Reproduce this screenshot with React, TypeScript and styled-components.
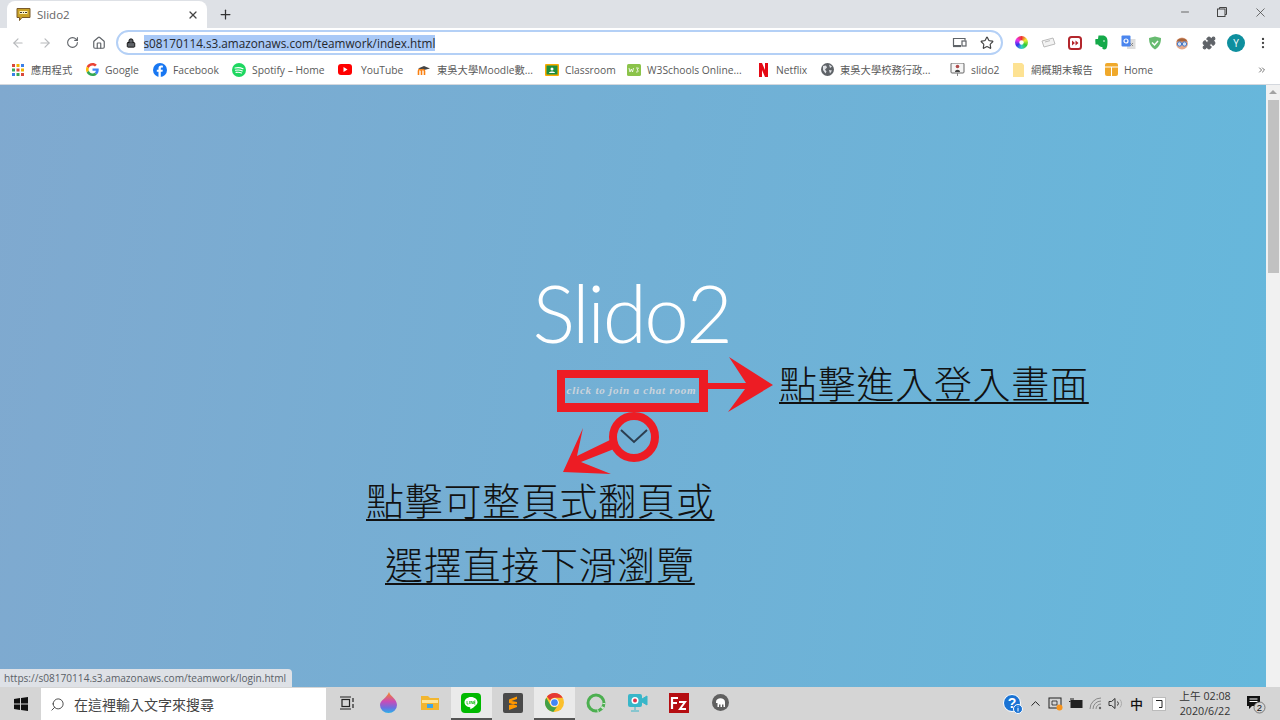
import React from "react";
import styled, { createGlobalStyle } from "styled-components";
import {
  ArrowLeft, ArrowRight, RotateCw, Home, Lock, Star, X, Plus, Minus, EllipsisVertical,
  Puzzle, Search, ChevronUp, ChevronsRight,
} from "lucide-react";

const UI = `"Open Sans", "Noto Sans CJK TC", sans-serif`;
const Global = createGlobalStyle`
  html, body { margin: 0; padding: 0; height: 100%; overflow: hidden; }
  body { font-family: ${UI}; }
`;

const Screen = styled.div`
  width: 1280px; height: 720px; display: flex; flex-direction: column; overflow: hidden; background: #fff;
`;
const TabStrip = styled.div`
  height: 28px; flex: none; background: #dee1e6; display: flex; align-items: flex-end; padding-left: 7px; box-sizing: border-box;
`;
const Tab = styled.div`
  width: 200px; height: 27px; background: #fff; border-radius: 8px 8px 0 0; display: flex; align-items: center;
  padding: 0 8px 0 9px; box-sizing: border-box; color: #5f6368;
`;
const TabTitle = styled.span`
  font-size: 11.5px; margin-left: 6px; flex: 1; color: #666;
`;
const NewTab = styled.span`
  width: 36px; align-self: center; flex: none; display: flex; align-items: center; justify-content: center;
`;
const WindowButton = styled.span<{ $w: number }>`
  width: ${p => p.$w}px; height: 24px; align-self: flex-start; flex: none; display: flex; align-items: center; justify-content: center;
`;
const IconSlot = styled.span<{ $w?: number }>`
  width: ${p => p.$w ?? 27}px; flex: none; display: flex; align-items: center; justify-content: center; color: #5f6368;
`;
const Spacer = styled.div`flex: 1;`;
const Toolbar = styled.div`
  height: 29px; flex: none; display: flex; align-items: center; padding-left: 4.5px; box-sizing: border-box; background: #fff;
`;
const Omnibox = styled.div`
  width: 887px; height: 25px; margin-left: 4px; border: 2px solid #b4d0f6; border-radius: 13px; box-sizing: border-box;
  display: flex; align-items: center; padding-left: 8px; flex: none;
`;
const Url = styled.span`
  margin-left: 8px; background: #a9c9f7; color: #26282c; font-size: 11.75px; line-height: 16px; white-space: nowrap; font-family: "Open Sans", sans-serif;
`;
const Extensions = styled.div`
  display: flex; align-items: center; margin-left: 5px;
`;
const Avatar = styled.div`
  width: 18px; height: 18px; border-radius: 50%; background: #0e8f9e; color: #fff; font-size: 10px; display: flex; align-items: center; justify-content: center;
`;
const Bookmarks = styled.div`
  height: 28px; flex: none; display: flex; align-items: center; padding: 0 0 2px 11px; box-sizing: border-box; background: #fff; border-bottom: 1px solid #d4d8de;
`;
const Bookmark = styled.div<{ $w: number }>`
  width: ${p => p.$w}px; flex: none; display: flex; align-items: center; gap: 6px; font-size: 10.3px; color: #5a5a5a; white-space: nowrap; overflow: hidden;
`;
const BookIcon = styled.span`
  min-width: 14px; height: 14px; flex: none; display: flex; align-items: center; justify-content: center;
`;
const Viewport = styled.div`
  flex: 1; min-height: 0; display: flex; position: relative;
`;
const Page = styled.main`
  flex: 1; position: relative; background: linear-gradient(100deg, #80a9cf 0%, #72b0d5 50%, #65b8dc 100%);
  display: flex; flex-direction: column; align-items: center; padding-top: 183px; box-sizing: border-box; overflow: hidden;
`;
const Title = styled.h1`
  margin: 0 0 0 -3px; font: 300 80px/88px "Lato", sans-serif; color: #fff; letter-spacing: -2.4px;
`;
const JoinLink = styled.a`
  margin-top: 22px; margin-left: -3px; width: 134px; height: 25px; display: flex; align-items: center; justify-content: center; white-space: nowrap;
  font: italic 700 11px/25px "Liberation Serif", serif; letter-spacing: 0.78px; color: #cbd4dc;
`;
const ChevronBtn = styled.div`
  margin-top: 26px; margin-left: 1px; display: flex;
`;
const Annotations = styled.svg`
  position: absolute; left: 0; top: 0; width: 1266px; height: 602px; pointer-events: none;
`;
const Note = styled.a<{ $x: number; $y: number }>`
  position: absolute; left: ${p => p.$x}px; top: ${p => p.$y}px; font: 300 38px/46px "Noto Sans CJK TC", sans-serif;
  letter-spacing: 0.72px; color: #111; text-decoration: underline; text-decoration-thickness: 2px; text-underline-offset: 4px; white-space: nowrap;
`;
const Scrollbar = styled.div`
  width: 14px; flex: none; background: #f1f1f1; display: flex; flex-direction: column; align-items: center; padding-top: 5px; box-sizing: border-box;
`;
const ScrollArrow = styled.div`
  width: 0; height: 0; border-left: 4px solid transparent; border-right: 4px solid transparent; border-bottom: 4px solid #a3a3a3;
`;
const Thumb = styled.div`
  width: 11px; height: 173px; margin-top: 6px; margin-left: 1px; background: #c1c1c1;
`;
const StatusBubble = styled.div`
  position: absolute; left: 0; bottom: 0; width: 292px; height: 18px; background: #dee1e6; border-radius: 0 4px 0 0; color: #5a5f66;
  font-size: 10.1px; line-height: 18px; padding-left: 4px; box-sizing: border-box; white-space: nowrap;
`;
const Taskbar = styled.footer`
  height: 33px; flex: none; background: #d5d5d5; display: flex; align-items: center; color: #222;
`;
const StartSlot = styled.div`
  width: 41px; display: flex; justify-content: center; flex: none;
`;
const SearchBox = styled.div`
  width: 285px; height: 32px; align-self: flex-end; background: #fff; display: flex; align-items: center; padding-left: 9px; gap: 9px; box-sizing: border-box; flex: none;
  font-size: 14px; color: #444;
`;
const Apps = styled.div`
  display: flex; align-items: stretch; align-self: stretch; flex: none;
`;
const AppSlot = styled.div<{ $active?: boolean }>`
  width: 41.5px; display: flex; align-items: center; justify-content: center; box-sizing: border-box;
  background: ${p => (p.$active ? "#eaeaea" : "transparent")};
  border-bottom: 2px solid ${p => (p.$active ? "#555" : "transparent")};
`;
const Tray = styled.div`
  display: flex; align-items: center; margin-left: auto; flex: none;
`;
const TraySlot = styled.div<{ $w: number }>`
  width: ${p => p.$w}px; flex: none; display: flex; align-items: center; justify-content: center; font-size: 13px; font-weight: 500; color: #111;
`;
const Clock = styled.div`
  width: 54px; margin-left: 7px; flex: none; text-align: center; font-size: 10.7px; line-height: 15px; color: #333; white-space: nowrap;
`;

const Favicon = () => (
  <svg width="15" height="15" viewBox="0 0 15 15"><path d="M1 1.5h13v9H6l-2.5 3v-3H1z" fill="#c9a227" stroke="#7a5a2a" strokeWidth="1"/><rect x="3.5" y="4" width="8" height="3" fill="#fff3c0"/><path d="M4 5.5h2M7 5.5h1M9 5.5h2" stroke="#333"/></svg>
);
const CastIcon = () => (
  <svg width="15" height="13" viewBox="0 0 15 13" fill="none" stroke="#5f6368" strokeWidth="1.2"><path d="M9 9.5H1.5V2.5H13v2"/><rect x="10" y="5" width="4" height="5"/><path d="M1 10.5h8"/></svg>
);
const ColorWheel = () => (
  <svg width="13" height="13" viewBox="0 0 14 14" style={{ background: "conic-gradient(#e33,#ee3,#3c3,#3cc,#33e,#e3e,#e33)", borderRadius: "50%" }}><circle cx="7" cy="7" r="2.4" fill="#fff"/></svg>
);
const Ticket = () => (
  <svg width="15" height="11" viewBox="0 0 15 11"><path d="M1 4l11-3 2 6-11 3z" fill="#f3f3f3" stroke="#bbb"/><path d="M4 5l5-1.4" stroke="#bbb"/></svg>
);
const RedPlay = () => (
  <svg width="14" height="14" viewBox="0 0 14 14"><rect x="1" y="1" width="12" height="12" rx="2.5" fill="#fff" stroke="#b3262c" strokeWidth="2"/><path d="M4 4.5l3 2.5-3 2.5zM7.5 4.5l3 2.5-3 2.5z" fill="#b3262c"/></svg>
);
const Evernote = () => (
  <svg width="13" height="15" viewBox="0 0 13 15"><path d="M3.5 0.5h4C10 0.5 12.500 2 12.500 6c0 5-.5 8.500-3 8.500-2 0-2.500-1-2-2.500-1.500 0-3.500-.5-4.500-2.500H.5C.5 7 0 5 .5 4H3z" fill="#14a949"/><circle cx="9" cy="6" r=".8" fill="#fff"/></svg>
);
const Translate = () => (
  <svg width="15" height="15" viewBox="0 0 15 15"><rect x="6" y="4" width="8.500" height="10" fill="#ddd"/><path d="M9 8l3 3M12 8l-3 3" stroke="#888"/><rect x="0.500" y="0.500" width="9" height="11" rx="1" fill="#4a85ee"/><circle cx="5" cy="6" r="2" fill="none" stroke="#fff" strokeWidth="1.2"/></svg>
);
const Shield = () => (
  <svg width="14" height="14" viewBox="0 0 14 14"><path d="M1 2l6-1.500L13 2c0 6-2 9-6 11.500C3 11 1 8 1 2z" fill="#68bb71"/><path d="M4 6.500l2.500 2.500L10 5" stroke="#fff" strokeWidth="1.500" fill="none"/></svg>
);
const Nerd = () => (
  <svg width="14" height="14" viewBox="0 0 14 14"><circle cx="7" cy="7.500" r="6" fill="#e6a98a"/><path d="M1.500 5.500C3 1 11 1 12.500 5.500z" fill="#a8643a"/><circle cx="4.500" cy="8" r="2.200" fill="#cfe0f4" stroke="#4577c8"/><circle cx="9.500" cy="8" r="2.200" fill="#cfe0f4" stroke="#4577c8"/></svg>
);
const AppsGrid = () => {
  const cols = ["#d9483b", "#f0b400", "#3a7fe8", "#3aa757", "#d9483b", "#f0b400", "#3a7fe8", "#3aa757", "#d9483b"];
  return <svg width="12" height="12" viewBox="0 0 12 12">{cols.map((c, i) => <rect key={i} x={(i % 3) * 4.500} y={Math.floor(i / 3) * 4.500} width="3" height="3" fill={c}/>)}</svg>;
};
const GoogleG = () => (
  <svg width="13" height="13" viewBox="0 0 48 48"><path fill="#EA4335" d="M24 9.500c3.500 0 6.700 1.300 9.100 3.500l6.800-6.800C35.800 2.400 30.200 0 24 0 14.600 0 6.500 5.400 2.600 13.200l7.900 6.200C12.400 13.700 17.700 9.500 24 9.500z"/><path fill="#4285F4" d="M47 24.500c0-1.600-.1-3.100-.4-4.500H24v9h12.900c-.6 3-2.200 5.500-4.700 7.200l7.700 6C44.400 38 47 31.800 47 24.500z"/><path fill="#FBBC05" d="M10.500 28.600c-.5-1.400-.8-3-.8-4.600s.3-3.200.8-4.600l-7.900-6.200C.9 16.500 0 20.100 0 24s.9 7.500 2.600 10.800z"/><path fill="#34A853" d="M24 48c6.500 0 11.900-2.100 15.900-5.800l-7.700-6c-2.100 1.400-4.900 2.300-8.200 2.300-6.300 0-11.600-4.200-13.500-9.900l-7.900 6.200C6.500 42.600 14.600 48 24 48z"/></svg>
);
const Fb = () => (
  <svg width="14" height="14" viewBox="0 0 14 14"><circle cx="7" cy="7" r="7" fill="#1877f2"/><path d="M7.800 14V8.800h1.700l.3-2H7.800V5.500c0-.6.300-1.100 1.100-1.100h1V2.700s-.9-.2-1.700-.2c-1.700 0-2.700 1-2.700 2.800v1.500H3.800v2h1.700V14z" fill="#fff"/></svg>
);
const Spotify = () => (
  <svg width="14" height="14" viewBox="0 0 14 14"><circle cx="7" cy="7" r="7" fill="#1ed760"/><path d="M3 5c2.800-.7 5.500-.5 8 .8M3.500 7.300c2.400-.6 4.700-.4 6.800.7M4 9.400c2-.4 3.800-.3 5.500.6" stroke="#fff" strokeWidth="1.100" fill="none" strokeLinecap="round"/></svg>
);
const Yt = () => (
  <svg width="17" height="11" viewBox="0 0 17 11"><rect width="14" height="11" rx="3" fill="#f00"/><path d="M5.500 3l4 2.500-4 2.500z" fill="#fff"/></svg>
);
const Moodle = () => (
  <svg width="14" height="12" viewBox="0 0 14 12"><path d="M1 4.500L7 2l6 2.500-6 1.500z" fill="#444"/><path d="M1.500 11V7c0-2 2-2 3 0v4M4.500 11V7c0-2 2.500-2 3 0v4M7.500 11V7" stroke="#f98012" strokeWidth="1.600" fill="none"/></svg>
);
const Classroom = () => (
  <svg width="14" height="12" viewBox="0 0 14 12"><rect width="14" height="12" rx="1" fill="#f9ab00"/><rect x="1.500" y="1.500" width="11" height="9" fill="#1e8e3e"/><circle cx="7" cy="5" r="1.500" fill="#fff"/><path d="M4 9c0-2 6-2 6 0z" fill="#fff"/></svg>
);
const W3 = () => (
  <svg width="14" height="12" viewBox="0 0 14 12"><rect width="14" height="12" rx="1.500" fill="#8bc34a"/><path d="M2 4l1 4 1.300-3 1.200 3 1-4M9 4h2.500L10 6c1.800 0 1.800 2.500-1 2" stroke="#fff" fill="none" strokeWidth=".8"/></svg>
);
const Netflix = () => (
  <svg width="9" height="14" viewBox="0 0 9 14"><path d="M0 0h3l3 7V0h3v14H6L3 7v7H0z" fill="#e50914"/></svg>
);
const Globe = () => (
  <svg width="13" height="13" viewBox="0 0 13 13"><circle cx="6.500" cy="6.500" r="6.500" fill="#5f6368"/><path d="M2 3l3-.5 1 2-2 2 1.500 2-1 2L2 7zM8 1.500l3 2-2 1.500zM8 7l3 .5-2 3z" fill="#dfe1e5"/></svg>
);
const SlidoFav = () => (
  <svg width="15" height="15" viewBox="0 0 15 15"><rect x="1" y="1" width="13" height="10" rx="1" fill="#f5f5f5" stroke="#666"/><circle cx="7.500" cy="4.500" r="1.800" fill="#b04a4a"/><path d="M5 10c0-3 5-3 5 0z" fill="#444"/><path d="M7.500 11v3" stroke="#888"/></svg>
);
const Folder = () => (
  <svg width="11" height="14" viewBox="0 0 11 14"><path d="M0 0h9l2 2v12H0z" fill="#fde293"/></svg>
);
const Box = () => (
  <svg width="13" height="13" viewBox="0 0 13 13"><rect width="13" height="13" rx="2" fill="#f0a92b"/><path d="M0 4h13M6.500 4v9" stroke="#fff" strokeWidth="1"/></svg>
);
const Windows = () => (
  <svg width="14" height="14" viewBox="0 0 14 14" fill="#111"><path d="M0 2l6-.9V6.600H0zM7 1l7-1v6.600H7zM0 7.400h6v5.500L0 12zM7 7.400h7V14l-7-1z"/></svg>
);
const TaskView = () => (
  <svg width="16" height="14" viewBox="0 0 16 14" fill="none" stroke="#222" strokeWidth="1.200"><rect x="3" y="3.500" width="7.500" height="7"/><path d="M1 1h11M1 13h11M14 2v4M14 8v4"/></svg>
);
const Fluent = () => (
  <svg width="17" height="21" viewBox="0 0 17 21"><defs><linearGradient id="fl" x1="0" y1="0" x2="0" y2="1"><stop offset="0" stopColor="#f58a1f"/><stop offset=".45" stopColor="#c94bb7"/><stop offset=".75" stopColor="#6c6fe0"/><stop offset="1" stopColor="#29b3e8"/></linearGradient></defs><path d="M9 0c1 4 8 7 8 13a8.500 8 0 0 1-17 0C0 8 7 6 9 0z" fill="url(#fl)"/></svg>
);
const Explorer = () => (
  <svg width="18" height="16" viewBox="0 0 18 16"><path d="M0 1h7l2 2h9v12H0z" fill="#f2b630"/><rect x="1" y="5" width="16" height="3" fill="#fde59a"/><rect x="6" y="9" width="6" height="4" fill="#3ea6e8"/></svg>
);
const Line = () => (
  <svg width="20" height="20" viewBox="0 0 20 20"><rect width="20" height="20" rx="4" fill="#00b900"/><path d="M10 4c-3.600 0-6.500 2.300-6.500 5.200 0 2.600 2.300 4.700 5.400 5.100.8.200.3 1.500.4 1.800.2.300 3.800-2 5.300-3.700 1.200-1.100 1.900-2 1.900-3.200C16.500 6.300 13.600 4 10 4z" fill="#fff"/><path d="M6 8v3h1.500M8.700 8v3M10 11V8l2 3V8M14.500 8H13v3h1.500M13 9.500h1.300" stroke="#00b900" strokeWidth=".7" fill="none"/></svg>
);
const Sublime = () => (
  <svg width="20" height="20" viewBox="0 0 20 20"><rect width="20" height="20" rx="2" fill="#4a4a4a"/><path d="M14 3.500L6 6.500v3.500l8 2.500v-3.500L8.500 8 14 6zM6 12l8-1.500V14l-8 3z" fill="#ff9800"/></svg>
);
const Chrome = () => (
  <svg width="19" height="19" viewBox="0 0 48 48"><circle cx="24" cy="24" r="24" fill="#fbc02d"/><path d="M24 0a24 24 0 0 1 20.800 12H24a12 12 0 0 0-11 7L5 9a24 24 0 0 1 19-9z" fill="#e53935"/><path d="M3.200 12L13.600 30A12 12 0 0 0 30 34.500L21 48A24 24 0 0 1 3.200 12z" fill="#43a047"/><circle cx="24" cy="24" r="11" fill="#fff"/><circle cx="24" cy="24" r="8.500" fill="#4285f4"/></svg>
);
const Ring = () => (
  <svg width="20" height="20" viewBox="0 0 20 20" fill="none"><circle cx="10" cy="10" r="8" stroke="#4caf50" strokeWidth="3"/><circle cx="10" cy="10" r="8" stroke="#cfe8cf" strokeWidth="3" strokeDasharray="1 3 2 4 1 40"/></svg>
);
const Recorder = () => (
  <svg width="21" height="20" viewBox="0 0 21 20"><rect x="1" y="1" width="14" height="13" rx="2" fill="#38b6c9"/><circle cx="8" cy="7.500" r="3.500" fill="#fff"/><circle cx="8" cy="7.500" r="2" fill="#e0334a"/><path d="M15 6l5-3v9l-5-3zM8 14v3M4 18h8" fill="#38b6c9" stroke="#38b6c9"/></svg>
);
const FileZilla = () => (
  <svg width="20" height="20" viewBox="0 0 20 20"><rect width="20" height="20" fill="#b50e12"/><path d="M3 16V5h6M3 10h5" stroke="#fff" strokeWidth="2.200" fill="none"/><path d="M10 9h6l-5 7h6" stroke="#fff" strokeWidth="2" fill="none"/></svg>
);
const Elephant = () => (
  <svg width="17" height="17" viewBox="0 0 17 17"><circle cx="8.500" cy="8.500" r="8.500" fill="#606060"/><path d="M4 8c0-5 9-5 9 0v5h-1.500v-2.500H10V13H8.500v-2.500H7V13H5.500V9H4z" fill="#fff"/></svg>
);
const Help = () => (
  <svg width="20" height="20" viewBox="0 0 20 20"><circle cx="9" cy="9" r="8.500" fill="#1a73d4" stroke="#fff"/><text x="9" y="14" textAnchor="middle" fontSize="14" fontWeight="700" fill="#fff" fontFamily="Liberation Sans">?</text><circle cx="15" cy="15" r="4.500" fill="#1a73d4" stroke="#fff"/><path d="M15 14v3.500M15 12.500v.8" stroke="#fff"/></svg>
);
const Defender = () => (
  <svg width="15" height="15" viewBox="0 0 15 15" fill="none"><rect x="1" y="2" width="12" height="10" stroke="#222"/><path d="M4 5h5v4H4z" stroke="#222" strokeWidth=".8"/><circle cx="11.500" cy="11.500" r="3" fill="#f7941d"/></svg>
);
const Battery = () => (
  <svg width="14" height="11" viewBox="0 0 14 11"><rect x="1.500" y="2" width="12" height="8" fill="#222"/><path d="M0 3.500h1.500M2 0v2M4 0v2" stroke="#222"/></svg>
);
const Wifi = () => (
  <svg width="14" height="13" viewBox="0 0 14 13" fill="none" stroke="#888"><path d="M1 12A11 11 0 0 1 12 1M4 12a8 8 0 0 1 8-8M7 12a5 5 0 0 1 5-5"/><circle cx="11" cy="11" r="1.200" fill="#666" stroke="none"/></svg>
);
const Volume = () => (
  <svg width="16" height="13" viewBox="0 0 16 13" fill="none" stroke="#333"><path d="M1 4.500h2.500L7 1.500v10l-3.500-3H1z"/><path d="M9.500 4.500a3 3 0 0 1 0 4" /><path d="M12 2.500a6 6 0 0 1 0 8" stroke="#aaa"/></svg>
);
const Ime = () => (
  <svg width="14" height="14" viewBox="0 0 14 14" fill="none"><rect x=".5" y=".5" width="13" height="13" fill="#fff" stroke="#bbb"/><path d="M4 3.500h6v7H7" stroke="#222"/></svg>
);
const Notify = () => (
  <svg width="20" height="20" viewBox="0 0 20 20"><path d="M1 2h13v10H6l-3 3v-3H1z" fill="#111"/><path d="M3.500 5h8M3.500 7.500h8" stroke="#fff"/><circle cx="13.500" cy="13.500" r="5.500" fill="#d5d5d5" stroke="#555" strokeWidth=".7"/><text x="13.500" y="17" textAnchor="middle" fontSize="9.500" fill="#111" fontFamily="Liberation Sans">2</text></svg>
);
const Restore = () => (
  <svg width="10" height="10" viewBox="0 0 10 10" fill="none" stroke="#444"><rect x=".5" y="2" width="7.500" height="7.500"/><path d="M2.500 2V.5h7v7H8"/></svg>
);

const bookmarks: [number, React.ReactNode, string][] = [
  [74, <AppsGrid />, "應用程式"],
  [68, <GoogleG />, "Google"],
  [79, <Fb />, "Facebook"],
  [106, <Spotify />, "Spotify – Home"],
  [79, <Yt />, "YouTube"],
  [128, <Moodle />, "東吳大學Moodle數..."],
  [82, <Classroom />, "Classroom"],
  [129, <W3 />, "W3Schools Online..."],
  [64, <Netflix />, "Netflix"],
  [130, <Globe />, "東吳大學校務行政..."],
  [61, <SlidoFav />, "slido2"],
  [93, <Folder />, "網概期末報告"],
  [153, <Box />, "Home"],
];

const apps: [React.ReactNode, boolean][] = [
  [<TaskView />, false], [<Fluent />, false], [<Explorer />, false], [<Line />, true], [<Sublime />, false],
  [<Chrome />, true], [<Ring />, false], [<Recorder />, false], [<FileZilla />, false], [<Elephant />, false],
];

export default function App() {
  return (
    <Screen lang="zh-Hant">
      <Global />
      <TabStrip>
        <Tab>
          <Favicon />
          <TabTitle>Slido2</TabTitle>
          <X size={12} strokeWidth={2.5} color="#444" />
        </Tab>
        <NewTab><Plus size={15} strokeWidth={2} color="#333" /></NewTab>
        <Spacer />
        <WindowButton $w={37}><Minus size={12} color="#666" /></WindowButton>
        <WindowButton $w={37}><Restore /></WindowButton>
        <WindowButton $w={40}><X size={15} strokeWidth={1.2} color="#444" /></WindowButton>
      </TabStrip>
      <Toolbar>
        <IconSlot><ArrowLeft size={14} color="#b7b9bc" /></IconSlot>
        <IconSlot><ArrowRight size={14} color="#b7b9bc" /></IconSlot>
        <IconSlot><RotateCw size={13} /></IconSlot>
        <IconSlot $w={26}><Home size={14} /></IconSlot>
        <Omnibox>
          <Lock size={10} fill="#5f6368" />
          <Url>s08170114.s3.amazonaws.com/teamwork/index.html</Url>
          <Spacer />
          <IconSlot $w={26}><CastIcon /></IconSlot>
          <IconSlot $w={28}><Star size={14} color="#444" /></IconSlot>
        </Omnibox>
        <Extensions>
          <IconSlot><ColorWheel /></IconSlot>
          <IconSlot><Ticket /></IconSlot>
          <IconSlot><RedPlay /></IconSlot>
          <IconSlot $w={26}><Evernote /></IconSlot>
          <IconSlot><Translate /></IconSlot>
          <IconSlot><Shield /></IconSlot>
          <IconSlot><Nerd /></IconSlot>
          <IconSlot><Puzzle size={14} fill="#5f6368" /></IconSlot>
          <IconSlot><Avatar>Y</Avatar></IconSlot>
          <IconSlot><EllipsisVertical size={14} color="#444" /></IconSlot>
        </Extensions>
      </Toolbar>
      <Bookmarks>
        {bookmarks.map(([w, icon, label]) => (
          <Bookmark key={label} $w={w}><BookIcon>{icon}</BookIcon>{label}</Bookmark>
        ))}
        <ChevronsRight size={10} color="#555" />
      </Bookmarks>
      <Viewport>
        <Page>
          <Title>Slido2</Title>
          <JoinLink>click to join a chat room</JoinLink>
          <ChevronBtn>
            <svg width="28" height="15" viewBox="0 0 28 15" fill="none"><path d="M1 1l13 12L27 1" stroke="#2c3e50" strokeWidth="2"/></svg>
          </ChevronBtn>
          <Annotations viewBox="0 0 1266 602">
            <g fill="#ed1c24" stroke="none">
              <path fillRule="evenodd" d="M557 285h151v42H557zM565 293v25h134v-25z"/>
              <path d="M706 298h40l-17-26 44 28-45 27 17-23h-39z"/>
              <path d="M583 343L563 387 611 389 581 377 614 364 610 355 577 371z"/>
            </g>
            <circle cx="634" cy="352" r="21" fill="none" stroke="#ed1c24" strokeWidth="8"/>
          </Annotations>
          <Note $x={779} $y={274}>點擊進入登入畫面</Note>
          <Note $x={366} $y={391}>點擊可整頁式翻頁或</Note>
          <Note $x={385} $y={455}>選擇直接下滑瀏覽</Note>
          <StatusBubble>https://s08170114.s3.amazonaws.com/teamwork/login.html</StatusBubble>
        </Page>
        <Scrollbar>
          <ScrollArrow />
          <Thumb />
        </Scrollbar>
      </Viewport>
      <Taskbar>
        <StartSlot><Windows /></StartSlot>
        <SearchBox><Search size={15} strokeWidth={1.5} style={{ transform: "scaleX(-1)" }} />在這裡輸入文字來搜尋</SearchBox>
        <Apps>
          {apps.map(([icon, active], i) => <AppSlot key={i} $active={active}>{icon}</AppSlot>)}
        </Apps>
        <Tray>
          <TraySlot $w={24}><Help /></TraySlot>
          <TraySlot $w={20}><ChevronUp size={15} strokeWidth={1.5} /></TraySlot>
          <TraySlot $w={20}><Defender /></TraySlot>
          <TraySlot $w={21}><Battery /></TraySlot>
          <TraySlot $w={20}><Wifi /></TraySlot>
          <TraySlot $w={20}><Volume /></TraySlot>
          <TraySlot $w={21}>中</TraySlot>
          <TraySlot $w={24}><Ime /></TraySlot>
          <Clock>上午 02:08<br />2020/6/22</Clock>
          <TraySlot $w={48}><Notify /></TraySlot>
        </Tray>
      </Taskbar>
    </Screen>
  );
}
